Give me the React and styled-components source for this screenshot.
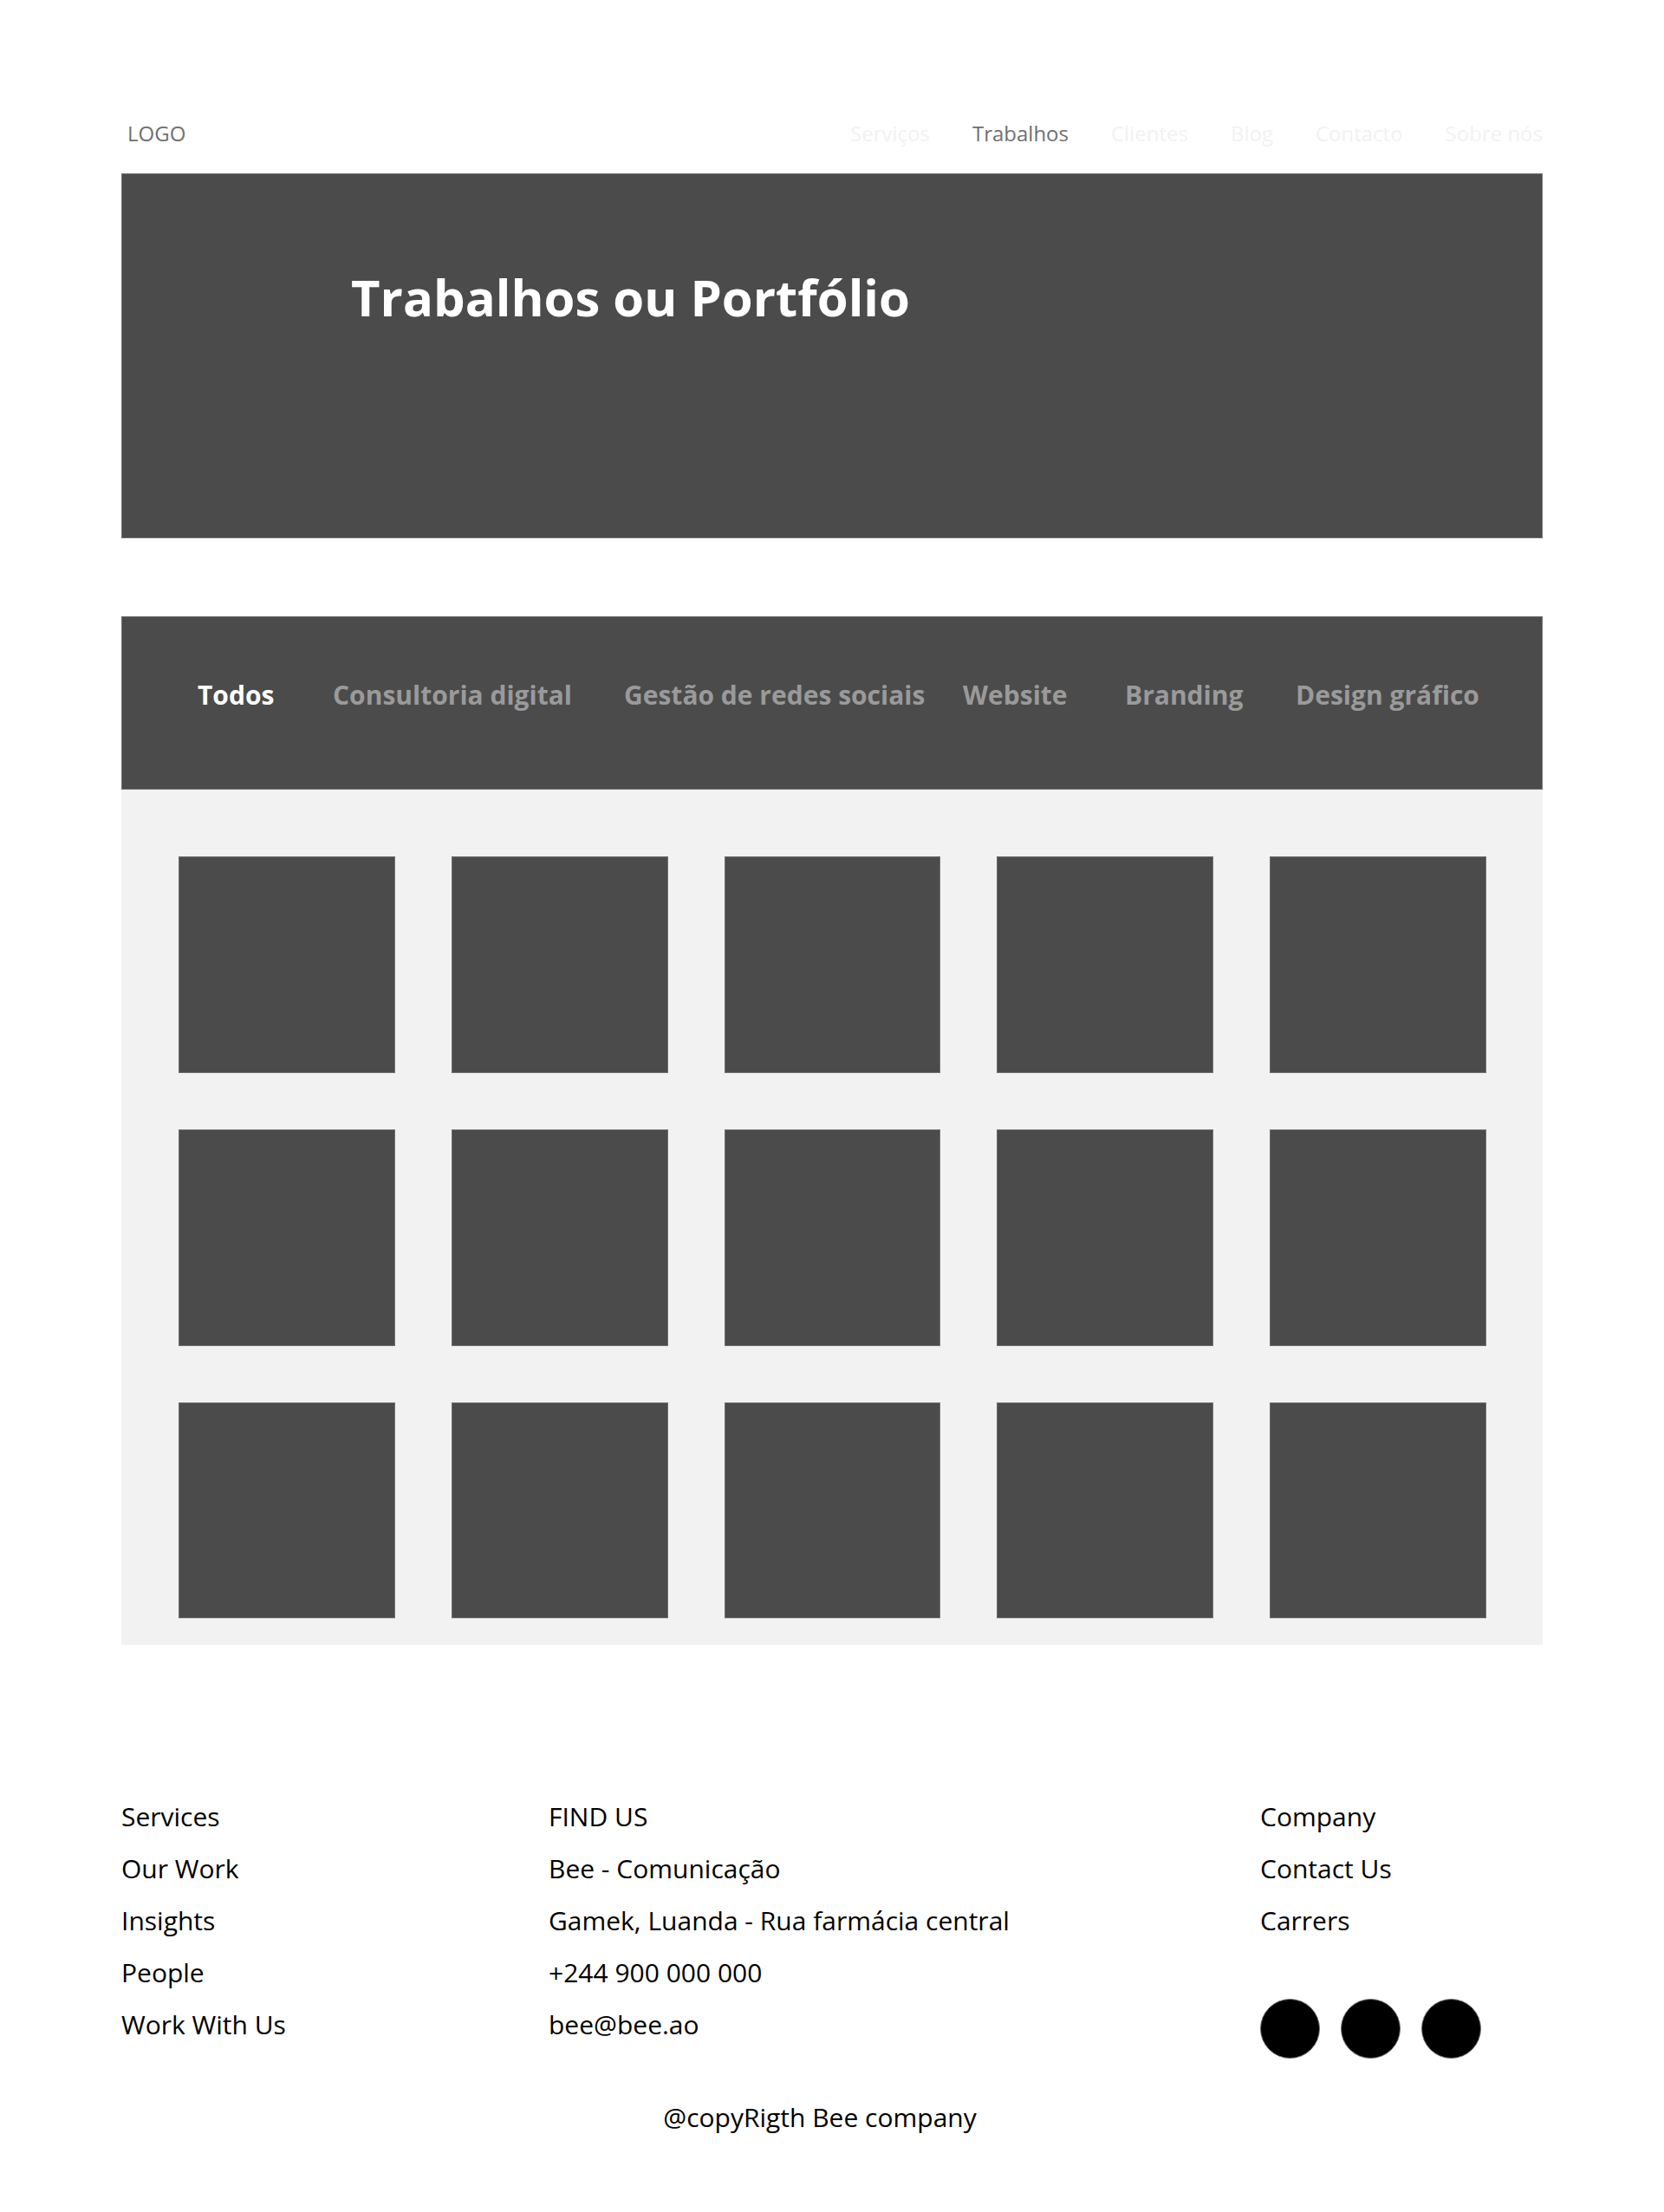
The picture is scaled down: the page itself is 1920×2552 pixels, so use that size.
import React, { useState } from "react";
import styled, { createGlobalStyle } from "styled-components";

const GlobalStyle = createGlobalStyle`
  *, *::before, *::after { box-sizing: border-box; }
  body {
    margin: 0;
    background: #fff;
    color: #000;
    font-family: "Open Sans", "Noto Sans", sans-serif;
  }
  ul, h1, p { margin: 0; padding: 0; }
  ul { list-style: none; }
  a { color: inherit; text-decoration: none; }
`;

const Page = styled.div`
  padding: 136px 140px 86px;
`;

const Header = styled.header`
  display: flex;
  justify-content: space-between;
  padding: 0 0 28px 7px;
  font-size: 24px;
  line-height: 36px;
  color: #707070;
`;

const NavList = styled.ul`
  display: flex;
  gap: 49px;
`;

const NavLink = styled.a`
  color: ${({ $active }) => ($active ? "#707070" : "#f2f2f2")};
`;

const Hero = styled.section`
  min-height: 421px;
  padding: 102px 264px;
  border: 1px solid #707070;
  background: #4b4b4b;
`;

const Title = styled.h1`
  color: #fff;
  font-size: 58px;
  font-weight: 700;
  line-height: 80px;
`;

const Portfolio = styled.main`
  margin-top: 90px;
  background: #f2f2f2;
`;

const Tabs = styled.div`
  display: grid;
  grid-template-columns: 156fr 336fr 391fr 187fr 197fr 220fr;
  min-height: 200px;
  padding: 66px 64px 0 87px;
  align-items: start;
  border: 1px solid #707070;
  background: #4b4b4b;
`;

const Tab = styled.button`
  padding: 0;
  border: 0;
  background: none;
  color: ${({ $active }) => ($active ? "#fff" : "#9a9a9a")};
  font: 700 30px/48px "Open Sans", "Noto Sans", sans-serif;
  text-align: left;
  white-space: nowrap;
  cursor: pointer;
`;

const Gallery = styled.div`
  display: grid;
  grid-template-columns: repeat(5, 1fr);
  gap: 65px;
  padding: 77px 65px 31px 66px;
`;

const Work = styled.article`
  aspect-ratio: 1;
  border: 1px solid #707070;
  background: #4b4b4b;
`;

const Footer = styled.footer`
  padding-top: 168px;
  font-size: 30px;
  line-height: 60px;
`;

const FooterColumns = styled.div`
  display: grid;
  grid-template-columns: 493fr 821fr 326fr;
`;

const Social = styled.div`
  display: flex;
  gap: 24px;
  margin-top: 60px;
`;

const SocialLink = styled.a`
  width: 69px;
  height: 69px;
  border: 1px solid #707070;
  border-radius: 50%;
  background: #000;
`;

const Copyright = styled.p`
  margin-top: 38px;
  padding-right: 28px;
  text-align: center;
`;

const pages = ["Serviços", "Trabalhos", "Clientes", "Blog", "Contacto", "Sobre nós"];
const categories = [
  "Todos",
  "Consultoria digital",
  "Gestão de redes sociais",
  "Website",
  "Branding",
  "Design gráfico",
];
const works = Array.from({ length: 15 }, (_, i) => i + 1);
const siteLinks = ["Services", "Our Work", "Insights", "People", "Work With Us"];
const companyLinks = ["Company", "Contact Us", "Carrers"];
const networks = ["Facebook", "Instagram", "LinkedIn"];

function LinkList({ items }) {
  return (
    <ul>
      {items.map((item) => (
        <li key={item}>
          <a href="#">{item}</a>
        </li>
      ))}
    </ul>
  );
}

export default function App() {
  const [category, setCategory] = useState("Todos");

  return (
    <>
      <GlobalStyle />
      <Page>
        <Header>
          <a href="#">LOGO</a>
          <nav>
            <NavList>
              {pages.map((page) => (
                <li key={page}>
                  <NavLink href="#" $active={page === "Trabalhos"}>
                    {page}
                  </NavLink>
                </li>
              ))}
            </NavList>
          </nav>
        </Header>

        <Hero>
          <Title>Trabalhos ou Portfólio</Title>
        </Hero>

        <Portfolio>
          <Tabs>
            {categories.map((name) => (
              <Tab
                key={name}
                type="button"
                $active={name === category}
                aria-pressed={name === category}
                onClick={() => setCategory(name)}
              >
                {name}
              </Tab>
            ))}
          </Tabs>
          <Gallery>
            {works.map((work) => (
              <Work key={work} />
            ))}
          </Gallery>
        </Portfolio>

        <Footer>
          <FooterColumns>
            <LinkList items={siteLinks} />
            <ul>
              <li>FIND US</li>
              <li>Bee - Comunicação</li>
              <li>Gamek, Luanda - Rua farmácia central</li>
              <li>
                <a href="tel:+244900000000">+244 900 000 000</a>
              </li>
              <li>
                <a href="mailto:bee@bee.ao">bee@bee.ao</a>
              </li>
            </ul>
            <div>
              <LinkList items={companyLinks} />
              <Social>
                {networks.map((network) => (
                  <SocialLink key={network} href="#" aria-label={network} />
                ))}
              </Social>
            </div>
          </FooterColumns>
          <Copyright>@copyRigth Bee company</Copyright>
        </Footer>
      </Page>
    </>
  );
}
